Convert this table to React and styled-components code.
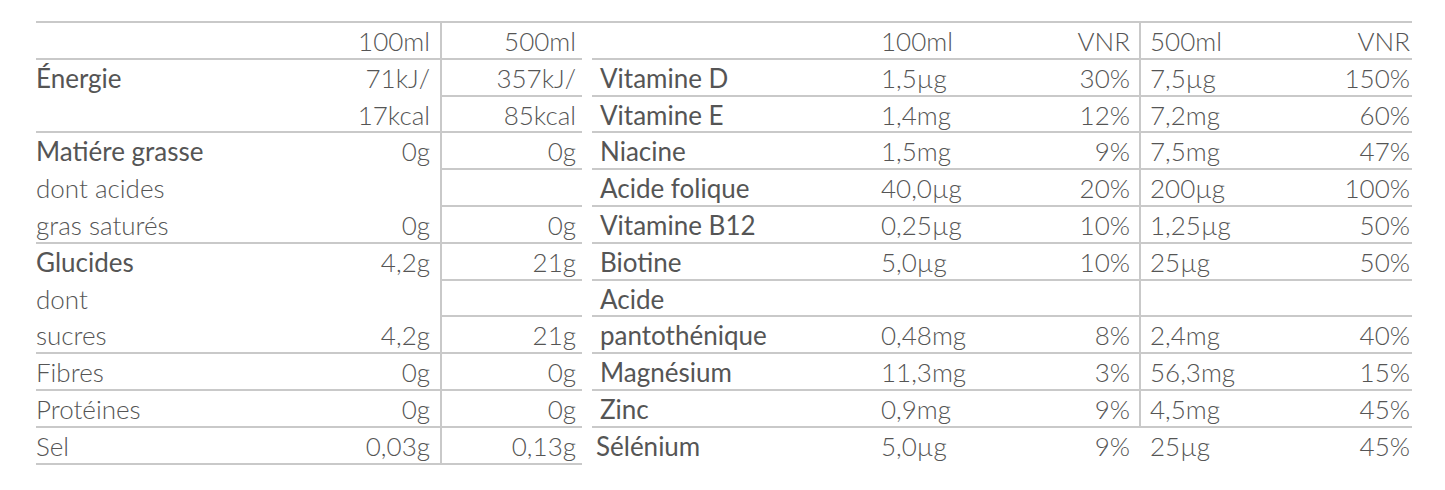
import styled, { createGlobalStyle } from "styled-components";

const ROW = 36.8;
const LINE = "#c9c9c9";

const GlobalStyle = createGlobalStyle`
  body {
    margin: 0;
    background: #fff;
  }
`;

const Page = styled.div`
  padding: 21px 0 0 36px;
  font-family: Lato, "Liberation Sans", sans-serif;
  font-size: 26px;
  color: #555;
`;

const Tables = styled.div`
  display: inline-flex;
  align-items: flex-start;
  gap: 10px;
  border-top: 2px solid ${LINE};
`;

const Block = styled.div`
  display: grid;
  grid-template-columns: ${(p) => p.$cols};
  grid-auto-rows: ${ROW}px;
  grid-auto-flow: dense;
`;

const Cell = styled.div`
  grid-row: span ${(p) => p.$span || 1};
  border-bottom: ${(p) => (p.$open ? "none" : `2px solid ${LINE}`)};
  border-left: ${(p) => (p.$divider ? `2px solid ${LINE}` : "none")};
  padding: 0 ${(p) => p.$pr || 0}px 0 ${(p) => p.$pl || 0}px;
  text-align: ${(p) => p.$align || "left"};
  font-weight: ${(p) => (p.$strong ? 400 : 300)};
  line-height: ${ROW}px;
  white-space: nowrap;
`;

const Line = styled.div`
  font-weight: ${(p) => (p.$strong ? 400 : "inherit")};
`;

// left block: label + 100ml share rows, 500ml column has its own single rows
const leftGroups = [
  { label: [""], v100: ["100ml"] },
  { label: [["Énergie", true], ""], v100: ["71kJ/", "17kcal"] },
  {
    label: [["Matiére grasse", true], "dont acides", "gras saturés"],
    v100: ["0g", "", "0g"],
  },
  { label: [["Glucides", true], "dont", "sucres"], v100: ["4,2g", "", "4,2g"] },
  { label: ["Fibres"], v100: ["0g"] },
  { label: ["Protéines"], v100: ["0g"] },
  { label: ["Sel"], v100: ["0,03g"] },
];

const v500 = [
  "500ml",
  "357kJ/",
  "85kcal",
  "0g",
  "",
  "0g",
  "21g",
  "",
  "21g",
  "0g",
  "0g",
  "0,13g",
];

const vitamins = [
  ["", "100ml", "VNR", "500ml", "VNR"],
  ["Vitamine D", "1,5µg", "30%", "7,5µg", "150%"],
  ["Vitamine E", "1,4mg", "12%", "7,2mg", "60%"],
  ["Niacine", "1,5mg", "9%", "7,5mg", "47%"],
  ["Acide folique", "40,0µg", "20%", "200µg", "100%"],
  ["Vitamine B12", "0,25µg", "10%", "1,25µg", "50%"],
  ["Biotine", "5,0µg", "10%", "25µg", "50%"],
  ["Acide", "", "", "", ""],
  ["pantothénique", "0,48mg", "8%", "2,4mg", "40%"],
  ["Magnésium", "11,3mg", "3%", "56,3mg", "15%"],
  ["Zinc", "0,9mg", "9%", "4,5mg", "45%"],
  ["Sélénium", "5,0µg", "9%", "25µg", "45%"],
];

function Nutrition() {
  const cells = [];
  leftGroups.forEach((g, i) => {
    const span = g.v100.length;
    cells.push(
      <Cell key={`l${i}`} $span={span} style={{ gridColumn: 1 }}>
        {g.label.map((l, k) =>
          Array.isArray(l) ? (
            <Line key={k} $strong>
              {l[0]}
            </Line>
          ) : (
            <Line key={k}>{l || "\u00a0"}</Line>
          )
        )}
      </Cell>
    );
    cells.push(
      <Cell key={`a${i}`} $span={span} $align="right" $pr={10} style={{ gridColumn: 2 }}>
        {g.v100.map((v, k) => (
          <Line key={k}>{v || "\u00a0"}</Line>
        ))}
      </Cell>
    );
  });
  v500.forEach((v, i) => {
    cells.push(
      <Cell
        key={`b${i}`}
        $divider
        $align="right"
        $pr={6}
        style={{ gridColumn: 3, gridRow: i + 1 }}
      >
        {v}
      </Cell>
    );
  });

  return <Block $cols="300px 104px 142px">{cells}</Block>;
}

function Vitamins() {
  const last = vitamins.length - 1;
  return (
    <Block $cols="289px 130px 128px 141px 132px">
      {vitamins.map((row, i) => {
        const open = i === last;
        const strong = i > 0;
        return [
          <Cell key={`n${i}`} $open={open} $strong={strong} $pl={open ? 4 : 8}>
            {row[0]}
          </Cell>,
          <Cell key={`c${i}`} $open={open}>
            {row[1]}
          </Cell>,
          <Cell key={`p${i}`} $open={open} $align="right" $pr={9}>
            {row[2]}
          </Cell>,
          <Cell key={`d${i}`} $open={open} $divider={!open} $pl={open ? 11 : 9}>
            {row[3]}
          </Cell>,
          <Cell key={`q${i}`} $open={open} $align="right" $pr={2}>
            {row[4]}
          </Cell>,
        ];
      })}
    </Block>
  );
}

export default function App() {
  return (
    <>
      <GlobalStyle />
      <Page>
        <Tables>
          <Nutrition />
          <Vitamins />
        </Tables>
      </Page>
    </>
  );
}
